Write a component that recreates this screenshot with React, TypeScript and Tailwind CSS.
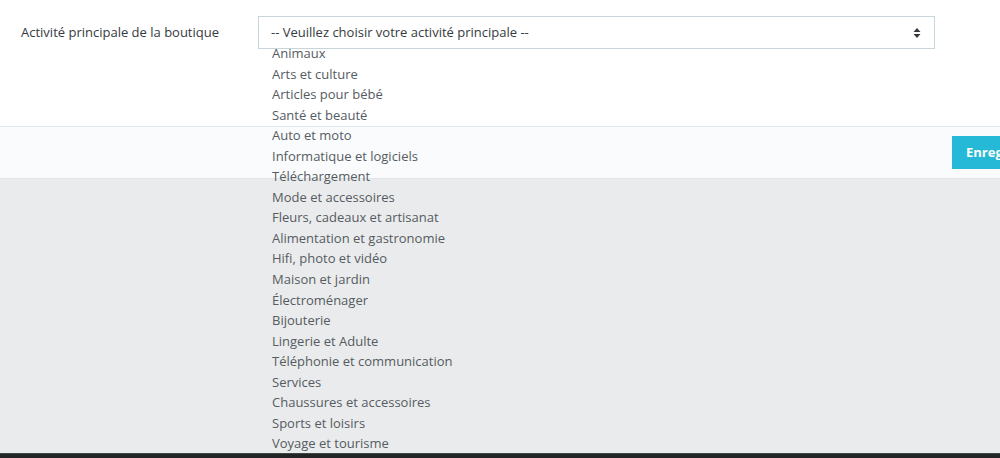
import React from 'react';

const options = [
  'Animaux',
  'Arts et culture',
  'Articles pour bébé',
  'Santé et beauté',
  'Auto et moto',
  'Informatique et logiciels',
  'Téléchargement',
  'Mode et accessoires',
  'Fleurs, cadeaux et artisanat',
  'Alimentation et gastronomie',
  'Hifi, photo et vidéo',
  'Maison et jardin',
  'Électroménager',
  'Bijouterie',
  'Lingerie et Adulte',
  'Téléphonie et communication',
  'Services',
  'Chaussures et accessoires',
  'Sports et loisirs',
  'Voyage et tourisme',
];

const SortArrows = () => (
  <svg width="8" height="12" viewBox="0 0 8 12" className="text-[#363a41]">
    <path d="M4 1 L7.5 5 L0.5 5 Z" fill="currentColor" />
    <path d="M4 11 L7.5 7 L0.5 7 Z" fill="currentColor" />
  </svg>
);

export default function App() {
  return (
    <div className="relative w-full h-[458px] flex flex-col overflow-hidden font-['Open_Sans',sans-serif] text-[13px]">
      {/* form row */}
      <div className="h-[127px] bg-white border-b border-[#dbe6e9] flex items-start pt-4 pl-[21px]">
        <div className="w-[237px] leading-[33px] text-[#363a41]">Activité principale de la boutique</div>
        <div className="relative z-10 w-[677px] h-[33px] bg-white border border-[#c7d6db] flex items-center justify-between pl-[12px] pr-[13px] text-[#363a41]">
          <span>-- Veuillez choisir votre activité principale --</span>
          <SortArrows />
        </div>
      </div>

      {/* footer */}
      <div className="h-[52px] bg-[#fafbfc] border-b border-[#e3e6e8] flex items-center pl-[952px] overflow-hidden">
        <button className="shrink-0 h-[33px] bg-[#25b9d7] text-white font-bold pl-[14px] pr-4 whitespace-nowrap">
          Enregistrer
        </button>
      </div>

      <div className="flex-1 bg-[#eaebec]" />
      <div className="h-[5px] bg-[#222426] border-t border-[#3b4a40]" />

      {/* open select options */}
      <ul className="absolute left-[272px] top-[43px] text-[#555b62]">
        {options.map((o) => (
          <li key={o} className="h-[20.55px] leading-[20.55px] whitespace-nowrap">
            {o}
          </li>
        ))}
      </ul>
    </div>
  );
}
